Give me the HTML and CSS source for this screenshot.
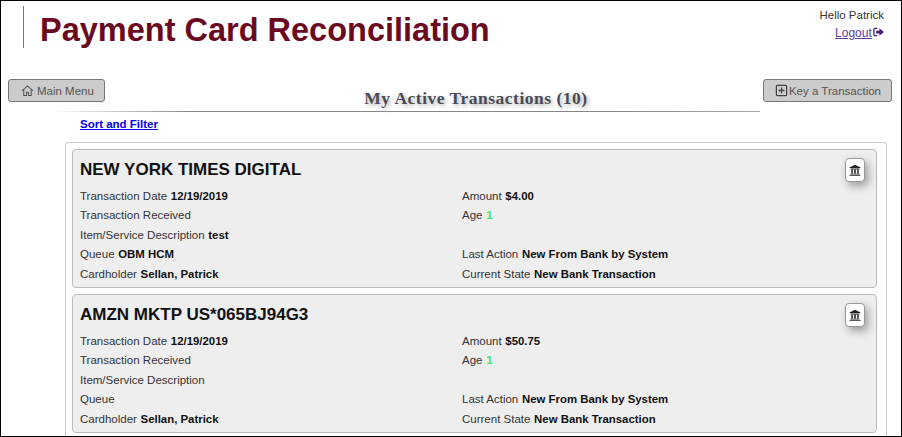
FILE: index.html
```html
<!DOCTYPE html>
<html lang="en">
<head>
    <meta charset="UTF-8">
    <title>Payment Card Reconciliation</title>
    <link rel="stylesheet" href="styles.css">
</head>
<body>
    <header class="page-header">
        <h1 class="app-title">Payment Card Reconciliation</h1>
        <div class="user-box">
            <div>Hello Patrick</div>
            <a class="logout" href="#">Logout</a>
            <svg class="logout-icon" viewBox="0 0 12 10"><path d="M4.500 1H2a1 1 0 0 0-1 1v6a1 1 0 0 0 1 1h2.500" fill="none" stroke="#4b1a7a" stroke-width="1.400"/><path d="M3.500 3.500H7V1l5 4-5 4V6.500H3.500z" fill="#4b1a7a"/></svg>
        </div>
    </header>

    <div class="toolbar">
        <button class="btn btn-menu">
            <svg class="btn-icon" viewBox="0 0 14 14"><path d="M1 7.500 7 2l6 5.500M3 6v6.500h3V9h2v3.500h3V6" fill="none" stroke="#555" stroke-width="1.100"/></svg>
            Main Menu
        </button>
        <h2 class="list-title">My Active Transactions (10)</h2>
        <button class="btn btn-key">
            <svg class="btn-icon" viewBox="0 0 14 14"><rect x="1.500" y="1.500" width="11" height="11" rx="1" fill="none" stroke="#444" stroke-width="1.300"/><path d="M7 3.800v6.400M3.800 7h6.400" stroke="#444" stroke-width="1.400"/></svg>
            Key a Transaction
        </button>
    </div>
    <div class="title-rule"></div>

    <a class="sort-link" href="#">Sort and Filter</a>

    <div class="list-box">
        <div class="card">
            <div class="card-head">
                <div class="card-title">NEW YORK TIMES DIGITAL</div>
                <button class="bank-btn">
                    <svg viewBox="0 0 12 12"><path d="M6 .8 11.500 3.400V4H.5v-.6zM1.500 4.600h9v.8h-9zM2.300 5.800h1.500v3.600H2.300zM5.200 5.800h1.600v3.600H5.200zM8.200 5.800h1.500v3.600H8.200zM1.300 9.800h9.400v.8H1.300zM.5 10.900h11v.9H.5z" fill="#222"/></svg>
                </button>
            </div>
            <div class="fields">
                <div>Transaction Date <b>12/19/2019</b></div>
                <div>Amount <b>$4.00</b></div>
                <div>Transaction Received</div>
                <div>Age <b class="age">1</b></div>
                <div>Item/Service Description <b>test</b></div>
                <div></div>
                <div>Queue <b>OBM HCM</b></div>
                <div>Last Action <b>New From Bank by System</b></div>
                <div>Cardholder <b>Sellan, Patrick</b></div>
                <div>Current State <b>New Bank Transaction</b></div>
            </div>
        </div>

        <div class="card">
            <div class="card-head">
                <div class="card-title">AMZN MKTP US*065BJ94G3</div>
                <button class="bank-btn">
                    <svg viewBox="0 0 12 12"><path d="M6 .8 11.500 3.400V4H.5v-.6zM1.500 4.600h9v.8h-9zM2.300 5.800h1.500v3.600H2.300zM5.200 5.800h1.600v3.600H5.200zM8.200 5.800h1.500v3.600H8.200zM1.300 9.800h9.400v.8H1.300zM.5 10.900h11v.9H.5z" fill="#222"/></svg>
                </button>
            </div>
            <div class="fields">
                <div>Transaction Date <b>12/19/2019</b></div>
                <div>Amount <b>$50.75</b></div>
                <div>Transaction Received</div>
                <div>Age <b class="age">1</b></div>
                <div>Item/Service Description</div>
                <div></div>
                <div>Queue</div>
                <div>Last Action <b>New From Bank by System</b></div>
                <div>Cardholder <b>Sellan, Patrick</b></div>
                <div>Current State <b>New Bank Transaction</b></div>
            </div>
        </div>
    </div>
</body>
</html>
```

FILE: styles.css
```css
* {
    margin: 0;
    padding: 0;
    box-sizing: border-box;
}

html, body {
    height: 100%;
    overflow: hidden;
}

body {
    background: #fff;
    color: #333;
    border: 1px solid #000;
    font-family: "Liberation Sans", Arial, sans-serif;
    font-size: 11.500px;
}

.page-header {
    display: flex;
    justify-content: space-between;
    height: 78px;
    padding: 5px 17px 0 22px;
}

.app-title {
    height: 42px;
    line-height: 48px;
    padding-left: 16px;
    border-left: 1px solid #777;
    color: #6b0a1f;
    font-size: 32.500px;
    font-weight: bold;
}

.user-box {
    padding-top: 1px;
    text-align: right;
    color: #333;
    line-height: 17px;
}

.logout {
    display: inline-block;
    margin-top: 1px;
    color: #5b3a9e;
    font-size: 12px;
}

.logout-icon {
    width: 11px;
    height: 10px;
    margin-left: -2px;
}

.toolbar {
    display: flex;
    align-items: flex-start;
    padding: 0 9px 0 7px;
}

.btn {
    display: flex;
    align-items: center;
    gap: 3px;
    height: 23px;
    padding: 0 10px 0 12px;
    background: #ccc;
    border: 1px solid #777;
    border-radius: 3px;
    color: #555;
    font-family: "Liberation Sans", Arial, sans-serif;
    font-size: 11.500px;
}

.btn-key {
    gap: 1px;
    padding: 0 10px 0 11px;
}

.btn-icon {
    width: 13px;
    height: 13px;
}

.list-title {
    flex: 1;
    padding: 9px 0 0 84px;
    text-align: center;
    color: #4a4a55;
    font-family: "Liberation Serif", Georgia, serif;
    font-size: 17.500px;
    font-weight: bold;
    letter-spacing: 0.5px;
    line-height: 20px;
    text-shadow: 2px 2px 4px #aaa;
}

.title-rule {
    width: 710px;
    height: 1px;
    margin: 3px 0 0 49px;
    background: linear-gradient(to right, #fff, #888 20%, #888 80%, #aaa);
}

.sort-link {
    display: block;
    margin: 6px 0 0 79px;
    color: #00e;
    font-size: 11.500px;
    font-weight: bold;
    line-height: 13px;
}

.list-box {
    display: flex;
    flex-direction: column;
    gap: 6px;
    width: 822px;
    height: 294px;
    margin: 11px 0 0 64px;
    padding: 6px 9px 0 6px;
    border: 1px solid #ccc;
    border-bottom: none;
    border-radius: 4px 4px 0 0;
}

.card {
    height: 139px;
    padding: 8px 11px 0 7px;
    background: #eee;
    border: 1px solid #bbb;
    border-radius: 4px;
}

.card-head {
    display: flex;
    justify-content: space-between;
    height: 28.500px;
}

.card-title {
    color: #111;
    font-size: 17px;
    font-weight: bold;
    line-height: 24px;
}

.bank-btn {
    display: flex;
    align-items: center;
    justify-content: center;
    width: 20px;
    height: 24px;
    background: #fff;
    border: 1px solid #999;
    border-radius: 4px;
    box-shadow: 3px 4px 8px rgba(0, 0, 0, 0.35);
}

.bank-btn svg {
    width: 12px;
    height: 12px;
}

.fields {
    display: grid;
    grid-template-columns: 382px 1fr;
    grid-auto-rows: 19.500px;
    line-height: 19.500px;
    color: #333;
}

.fields b {
    margin-left: 0.5px;
    color: #111;
    font-size: 11.400px;
}

.fields .age {
    color: #33ee66;
}
```
